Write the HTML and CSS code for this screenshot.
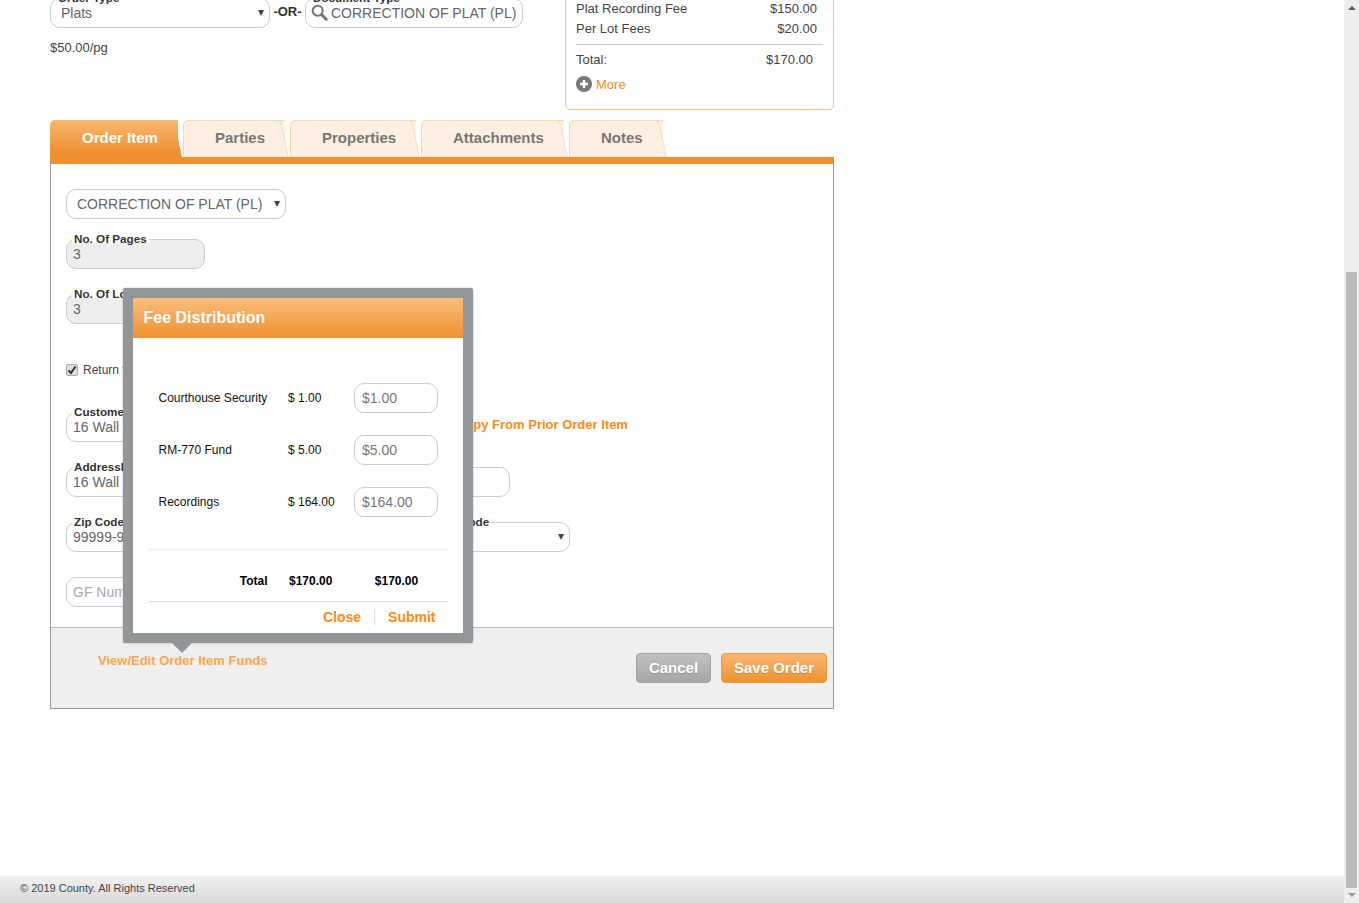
FILE: index.html
```html
<!DOCTYPE html>
<html lang="en">
<head>
  <meta charset="UTF-8">
  <meta name="viewport" content="width=device-width, initial-scale=1.0">
  <title>Order Item</title>
  <link rel="stylesheet" href="styles.css">
</head>
<body>
  <div class="app">
    <div class="viewport">
      <main class="main">
        <div class="page">
          <div class="top-row">
            <div class="top-left">
              <div class="top-fields">
                <div class="field order-type">
                  <label class="field-label">Order Type</label>
                  <div class="box select-box">Plats<span class="arrow">▾</span></div>
                </div>
                <span class="or">-OR-</span>
                <div class="field doc-type">
                  <label class="field-label">Document Type</label>
                  <div class="box search-box">
                    <svg class="search-icon" width="17" height="17" viewBox="0 0 19 19"><circle cx="7.5" cy="7.5" r="5.6" fill="none" stroke="#777" stroke-width="2.4"/><path d="M11.8 11.8l5.2 5.2" stroke="#777" stroke-width="3.4" stroke-linecap="round"/></svg>
                    CORRECTION OF PLAT (PL)
                  </div>
                </div>
              </div>
              <p class="price">$50.00/pg</p>
            </div>
            <div class="summary">
              <div class="summary-row"><span>Plat Recording Fee</span><span>$150.00</span></div>
              <div class="summary-row"><span>Per Lot Fees</span><span>$20.00</span></div>
              <div class="summary-row total"><span>Total:</span><span>$170.00</span></div>
              <a class="more">
                <svg width="16" height="16" viewBox="0 0 16 16"><circle cx="8" cy="8" r="8" fill="#777"/><path d="M8 4v8M4 8h8" stroke="#fff" stroke-width="2.4"/></svg>
                More
              </a>
            </div>
          </div>

          <div class="tabs">
            <div class="tab active tab-order">Order Item</div>
            <div class="tab tab-parties">Parties</div>
            <div class="tab tab-properties">Properties</div>
            <div class="tab tab-attachments">Attachments</div>
            <div class="tab tab-notes">Notes</div>
          </div>

          <div class="panel">
            <div class="panel-body">
              <div class="box select-box doc-select">CORRECTION OF PLAT (PL)<span class="arrow">▾</span></div>
              <div class="field pages-field">
                <label class="field-label">No. Of Pages</label>
                <div class="box readonly">3</div>
              </div>
              <div class="field pages-field">
                <label class="field-label">No. Of Lots</label>
                <div class="box readonly">3</div>
              </div>
              <label class="check-row">
                <span class="check-mark"><svg width="10" height="10" viewBox="0 0 10 10"><path d="M1.5 5.5l2.5 2.5 4.5-6.5" fill="none" stroke="#333" stroke-width="2"/></svg></span>
                Return to Customer
              </label>
              <div class="form-row">
                <div class="field customer-field">
                  <label class="field-label">Customer Address</label>
                  <div class="box">16 Wall Street</div>
                </div>
                <a class="copy-link">Copy From Prior Order Item</a>
              </div>
              <div class="form-row">
                <div class="field address-field">
                  <label class="field-label">AddressLine 1</label>
                  <div class="box">16 Wall Street</div>
                </div>
                <div class="field address2-field"><div class="box"></div></div>
              </div>
              <div class="form-row">
                <div class="field zip-field">
                  <label class="field-label">Zip Code</label>
                  <div class="box">99999-9999</div>
                </div>
                <div class="field country-field">
                  <label class="field-label">Country Code</label>
                  <div class="box select-box"><span class="arrow">▾</span></div>
                </div>
              </div>
              <div class="field zip-field">
                <div class="box placeholder">GF Number</div>
              </div>
            </div>
            <div class="panel-foot">
              <a class="funds-link">View/Edit Order Item Funds</a>
              <div class="foot-buttons">
                <button class="btn btn-cancel">Cancel</button>
                <button class="btn btn-save">Save Order</button>
              </div>
            </div>

            <div class="modal">
              <h2 class="modal-title">Fee Distribution</h2>
              <div class="modal-body">
                <div class="fee-row"><span>Courthouse Security</span><span>$ 1.00</span><div class="box fee-input">$1.00</div></div>
                <div class="fee-row"><span>RM-770 Fund</span><span>$ 5.00</span><div class="box fee-input">$5.00</div></div>
                <div class="fee-row"><span>Recordings</span><span>$ 164.00</span><div class="box fee-input">$164.00</div></div>
                <div class="fee-row fee-total"><span>Total</span><span>$170.00</span><span>$170.00</span></div>
                <div class="modal-actions"><a>Close</a><a>Submit</a></div>
              </div>
            </div>
          </div>
        </div>
      </main>
      <footer class="site-foot">© 2019 County. All Rights Reserved</footer>
    </div>
    <div class="scrollbar">
      <span class="scroll-up"></span>
      <span class="scroll-thumb"></span>
      <span class="scroll-down"></span>
    </div>
  </div>
</body>
</html>
```

FILE: styles.css
```css
/* Reset and base styling */
* { box-sizing: border-box; margin: 0; padding: 0; }
html, body { height: 100%; overflow: hidden; }
body {
  font-family: "Liberation Sans", Arial, sans-serif;
  font-size: 13px;
  color: #444;
  background: #fff;
}
.app { display: flex; height: 903px; }
.viewport { flex: 1; display: flex; flex-direction: column; min-width: 0; }
.main { flex: 1; overflow: hidden; }

/* page is scrolled down a bit in the reference */
.page { margin-top: -30px; padding-left: 50px; width: 834px; }

.top-row { display: flex; justify-content: space-between; height: 140px; }
.top-left { padding-top: 28px; }
.top-fields { display: flex; align-items: flex-start; }
.or { font-weight: bold; color: #333; width: 35px; text-align: center; padding-top: 6px; }
.price { margin-top: 12px; line-height: 15px; }

.field { position: relative; }
.field-label {
  position: absolute;
  z-index: 1;
  left: 6px;
  top: -5px;
  padding: 0 2px;
  height: 9px;
  line-height: 10px;
  font-size: 11.7px;
  font-weight: bold;
  color: #333;
  background: #fff;
  white-space: nowrap;
}
.box {
  position: relative;
  height: 30px;
  line-height: 28px;
  padding: 0 6px;
  font-size: 14px;
  color: #666;
  background: #fff;
  border: 1px solid #ccc;
  border-radius: 10px;
  white-space: nowrap;
  overflow: hidden;
}
.select-box { padding-left: 10px; }
.arrow {
  position: absolute;
  right: 5px;
  top: -1px;
  font-size: 12px;
  color: #444;
}
.readonly { background: #eee; }
.placeholder { color: #aaa; }

.order-type { width: 220px; }
.doc-type { width: 218px; }
.search-box { padding-left: 25px; }
.search-icon { position: absolute; left: 5px; top: 5px; }

.summary {
  width: 269px;
  height: 140px;
  padding: 30px 10px 0;
  border: 1px solid #f6bc80;
  border-radius: 5px;
}
.summary-row {
  display: flex;
  justify-content: space-between;
  height: 20px;
  line-height: 16px;
  padding-right: 6px;
}
.summary-row.total {
  height: auto;
  line-height: 15px;
  border-top: 1px solid #ccc;
  margin-top: 3px;
  padding-top: 7px;
  padding-right: 10px;
}
.more {
  display: flex;
  align-items: center;
  gap: 4px;
  margin-top: 9px;
  color: #ff8a14;
}

/* Tabs */
.tabs { display: flex; margin-top: 10px; height: 37px; }
.tab {
  position: relative;
  height: 37px;
  line-height: 33px;
  padding-left: 31px;
  font-size: 15px;
  font-weight: bold;
  color: #777;
  background: #fdf0e2;
  border: 1px solid #fdd7ab;
  border-width: 1px 0 0 1px;
  border-radius: 5px 0 0 0;
}
.tab::after {
  content: "";
  position: absolute;
  top: -1px;
  right: 0;
  bottom: 0;
  width: 14px;
  background: #fdf0e2;
  border: 1px solid #fdd7ab;
  border-width: 1px 1px 0 0;
  border-radius: 0 4px 0 0;
  transform: skewX(12deg);
}
.tab.active {
  color: #fff;
  border: 0;
  padding-left: 32px;
  line-height: 36px;
  background: linear-gradient(#f9b872, #ef9130 85%);
}
.tab.active::after {
  top: 0;
  border: 0;
  background: linear-gradient(#f9b872, #ef9130 85%);
}
.tab-order { width: 128px; margin-right: 5px; }
.tab-parties { width: 102px; margin-right: 5px; }
.tab-properties { width: 126px; margin-right: 5px; }
.tab-attachments { width: 143px; margin-right: 5px; }
.tab-notes { width: 94px; }

/* Panel */
.panel {
  position: relative;
  border: 1px solid #999;
  border-top: 7px solid #ef9130;
  height: 552px;
  display: flex;
  flex-direction: column;
}
.panel-body {
  flex: 1;
  padding: 25px 15px 0;
  display: flex;
  flex-direction: column;
  align-items: flex-start;
}
.doc-select { width: 220px; margin-bottom: 20px; }
.pages-field { width: 139px; margin-bottom: 25px; }
.check-row {
  display: flex;
  align-items: center;
  gap: 5px;
  height: 14px;
  margin: 14px 0 35px;
  font-size: 12px;
  color: #444;
}
.check-mark {
  display: flex;
  width: 12px;
  height: 12px;
  background: #ddd;
  border: 1px solid #aaa;
  border-radius: 2px;
}
.form-row { display: flex; align-items: flex-start; margin-bottom: 25px; width: 100%; }
.customer-field { width: 300px; }
.copy-link {
  margin-left: 90px;
  line-height: 26px;
  font-weight: bold;
  color: #ff8a14;
  white-space: nowrap;
}
.address-field { width: 260px; }
.address2-field { width: 175px; margin-left: 9px; }
.zip-field { width: 220px; }
.country-field { width: 166px; margin-left: 118px; }

.panel-foot {
  position: relative;
  height: 81px;
  flex: none;
  background: #efefef;
  border-top: 1px solid #bbb;
  display: flex;
  justify-content: space-between;
  padding: 25px 6px 0 47px;
}
.funds-link { font-weight: bold; color: #ffa64d; line-height: 15px; }
.foot-buttons { display: flex; gap: 10px; }
.btn {
  height: 30px;
  padding-bottom: 2px;
  font-family: inherit;
  font-size: 15px;
  font-weight: bold;
  color: #fff;
  border-radius: 4px;
  cursor: pointer;
  text-shadow: 0 1px 1px rgba(0,0,0,0.15);
}
.btn-cancel {
  width: 75px;
  background: linear-gradient(#c0c0c0, #a6a6a6);
  border: 1px solid #a2a2a2;
}
.btn-save {
  width: 106px;
  background: linear-gradient(#f9b872, #ef9130);
  border: 1px solid #ef9a3e;
}

/* Fee popup */
.modal {
  position: absolute;
  z-index: 2;
  left: 72px;
  top: 124px;
  width: 350px;
  height: 355px;
  border: 10px solid #939699;
  border-radius: 2px;
  background: #fff;
  box-shadow: 0 0 2px rgba(0,0,0,0.3);
}
.modal::after {
  content: "";
  position: absolute;
  left: 39px;
  bottom: -20px;
  border: 10px solid transparent;
  border-bottom-width: 0;
  border-top-color: #939699;
}
.modal-title {
  height: 40px;
  line-height: 39px;
  padding-left: 10.5px;
  font-size: 16px;
  color: #fff;
  background: linear-gradient(#fbbd7b, #ef9130);
}
.modal-body { padding: 34px 15px 0; }
.fee-row {
  display: grid;
  grid-template-columns: 130px 66px 84px;
  align-items: center;
  height: 52px;
  padding-left: 10px;
  font-size: 12px;
  color: #111;
}
.fee-row span:first-child { padding-left: 0.5px; }
.fee-input { height: 30px; padding: 0 7px; color: #777; }
.fee-total {
  height: 53px;
  margin-top: 21px;
  border-top: 1px solid #eee;
  border-bottom: 1px solid #ddd;
  font-weight: bold;
  color: #000;
  padding-top: 11px;
}
.fee-total span:first-child { text-align: right; padding-right: 20.5px; }
.fee-total span:nth-child(2) { padding-left: 1px; }
.fee-total span:last-child { text-align: center; padding-left: 1px; }
.modal-actions {
  display: flex;
  justify-content: flex-end;
  padding: 7px 12.5px 0 0;
  font-size: 14px;
  font-weight: bold;
  color: #ff8a14;
}
.modal-actions a { line-height: 16px; }
.modal-actions a + a { margin-left: 13px; padding-left: 13px; border-left: 1px solid #ddd; }

/* Footer */
.site-foot {
  flex: none;
  height: 27px;
  line-height: 24px;
  padding-left: 20px;
  font-size: 11px;
  color: #444;
  background: linear-gradient(#f2f2f2, #d9d9d9);
}

/* Fake scrollbar */
.scrollbar {
  flex: none;
  width: 15px;
  position: relative;
  background: #eee;
}
.scroll-thumb {
  position: absolute;
  left: 2px;
  right: 2px;
  top: 272px;
  height: 616px;
  background: #bbb;
}
.scroll-up, .scroll-down {
  position: absolute;
  left: 4px;
  border: 4px solid transparent;
}
.scroll-up { top: 6px; border-top-width: 0; border-bottom: 4px solid #555; }
.scroll-down { bottom: 6px; border-bottom-width: 0; border-top: 4px solid #999; }
```
